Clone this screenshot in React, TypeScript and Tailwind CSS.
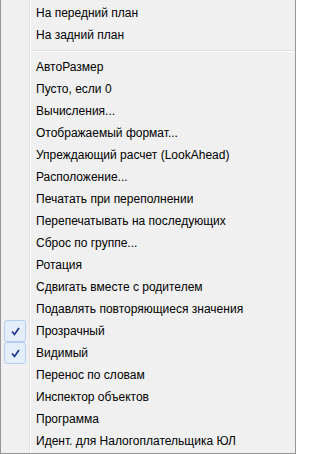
import React from 'react'

const topItems = ['На передний план', 'На задний план']

const items: { label: string; checked?: boolean }[] = [
  { label: 'АвтоРазмер' },
  { label: 'Пусто, если 0' },
  { label: 'Вычисления...' },
  { label: 'Отображаемый формат...' },
  { label: 'Упреждающий расчет (LookAhead)' },
  { label: 'Расположение...' },
  { label: 'Печатать при переполнении' },
  { label: 'Перепечатывать на последующих' },
  { label: 'Сброс по группе...' },
  { label: 'Ротация' },
  { label: 'Сдвигать вместе с родителем' },
  { label: 'Подавлять повторяющиеся значения' },
  { label: 'Прозрачный', checked: true },
  { label: 'Видимый', checked: true },
  { label: 'Перенос по словам' },
  { label: 'Инспектор объектов' },
  { label: 'Программа' },
  { label: 'Идент. для Налогоплательщика ЮЛ' },
]

function MenuItem({ label, checked }: { label: string; checked?: boolean }) {
  return (
    <div className="flex h-[22px] items-center">
      <div className="flex w-[29px] shrink-0 items-center pl-[3px]">
        {checked && (
          <div className="flex h-[22px] w-[22px] items-center justify-center rounded-[3px] border border-[#b4cdf0] bg-[#e4edfa]">
            <svg width="9" height="9" viewBox="0 0 9 9">
              <path d="M1 4.5 L3.5 7.5 L8 1" stroke="#17308e" strokeWidth="1.6" fill="none" />
            </svg>
          </div>
        )}
      </div>
      <div className="ml-[6px] whitespace-nowrap text-[12px] leading-none text-black">{label}</div>
    </div>
  )
}

export default function App() {
  return (
    <div
      className="h-[454px] w-[296px] overflow-hidden bg-[#f0f0f0]"
      style={{ fontFamily: '"Liberation Sans", Arial, sans-serif' }}
    >
      <div className="relative h-full border-b border-l border-r border-[#979797] pt-[2px]">
        {/* gutter line */}
        <div className="absolute bottom-0 left-[28px] top-0 w-[2px] border-l border-[#e2e3e3] bg-white" />
        <div className="relative">
          {topItems.map((t) => (
            <MenuItem key={t} label={t} />
          ))}
          <div className="flex h-[10px] items-center pl-[30px] pr-[1px]">
            <div className="h-[2px] w-full border-t border-[#e0e0e0] bg-white" />
          </div>
          {items.map((it) => (
            <MenuItem key={it.label} label={it.label} checked={it.checked} />
          ))}
        </div>
      </div>
    </div>
  )
}
